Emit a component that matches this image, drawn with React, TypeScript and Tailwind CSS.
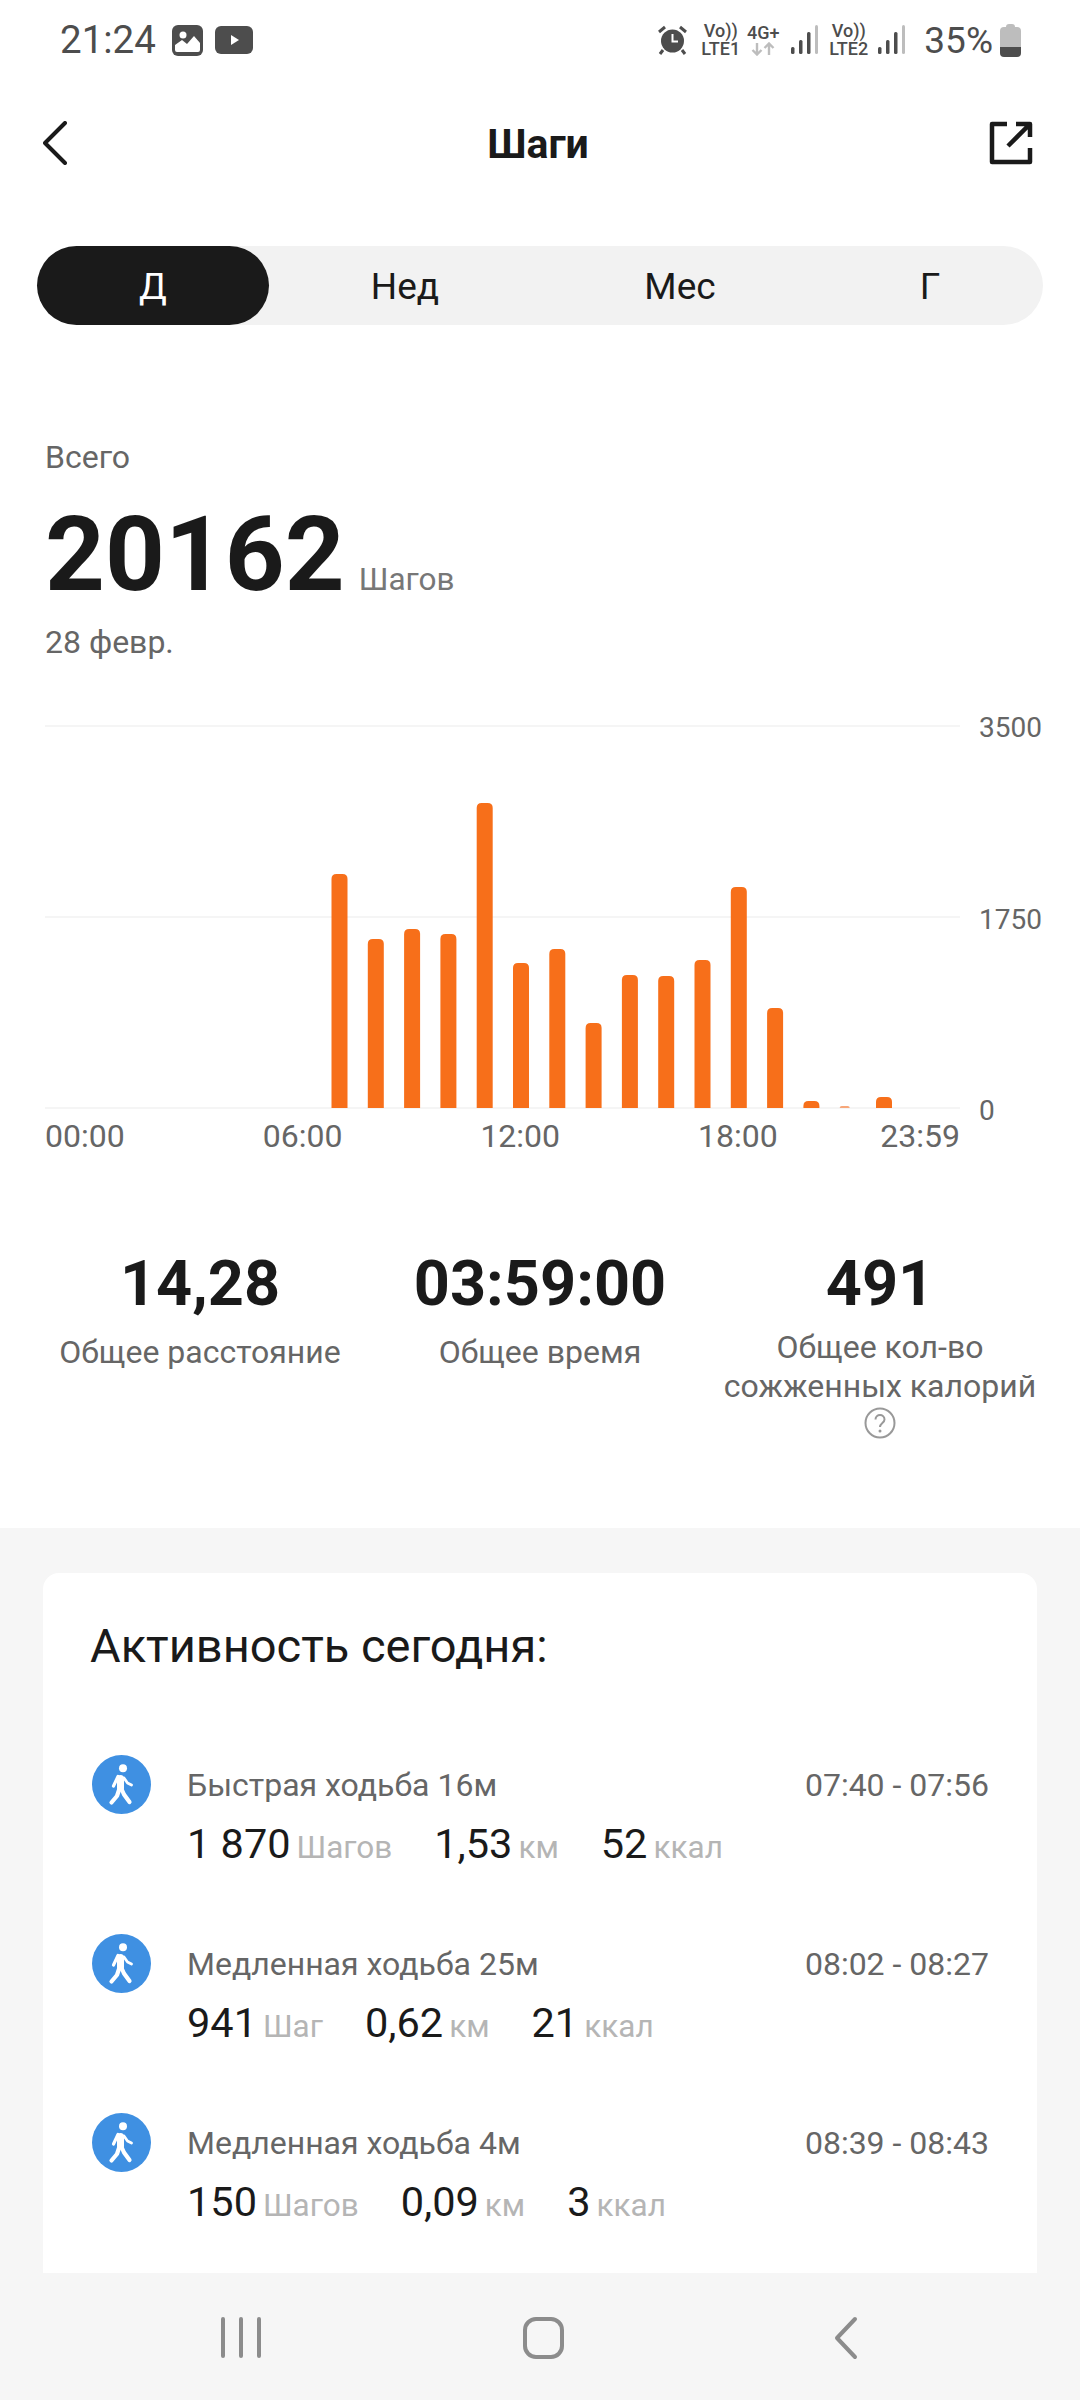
import React from 'react';

const bars = [
  { h: 234 }, { h: 169 }, { h: 179 }, { h: 174 }, { h: 305 }, { h: 145 }, { h: 159 }, { h: 85 },
  { h: 133 }, { h: 132 }, { h: 148 }, { h: 221 }, { h: 100 }, { h: 7 }, { h: 2 }, { h: 11 },
];

const activities = [
  {
    title: 'Быстрая ходьба 16м',
    time: '07:40 - 07:56',
    values: [['1 870', 'Шагов'], ['1,53', 'км'], ['52', 'ккал']],
  },
  {
    title: 'Медленная ходьба 25м',
    time: '08:02 - 08:27',
    values: [['941', 'Шаг'], ['0,62', 'км'], ['21', 'ккал']],
  },
  {
    title: 'Медленная ходьба 4м',
    time: '08:39 - 08:43',
    values: [['150', 'Шагов'], ['0,09', 'км'], ['3', 'ккал']],
  },
];

const Signal = () => (
  <svg width="28" height="30" viewBox="0 0 28 30" className="shrink-0">
    <rect x="0" y="22" width="3.5" height="7" rx="1.5" fill="#4d4d4d" />
    <rect x="8" y="15" width="3.5" height="14" rx="1.5" fill="#4d4d4d" />
    <rect x="16" y="7" width="3.5" height="22" rx="1.5" fill="#4d4d4d" />
    <rect x="24" y="0" width="3" height="29" rx="1.5" fill="#bdbdbd" />
  </svg>
);

const Walker = () => (
  <svg width="59" height="59" viewBox="0 0 59 59" fill="none" stroke="#fff" strokeLinecap="round" strokeLinejoin="round" className="shrink-0">
    <circle cx="29.5" cy="29.5" r="29.5" fill="#3f90e2" stroke="none" />
    <circle cx="31" cy="13.3" r="4" fill="#fff" stroke="none" />
    <path d="M28.5 23.5 V33" strokeWidth="7" />
    <path d="M26 21.5 L21.5 31" strokeWidth="3.2" />
    <path d="M32 23 L35.5 28 L39.5 30" strokeWidth="2.8" />
    <path d="M29.5 34 L32 39.5 L37.5 47" strokeWidth="4.2" />
    <path d="M27 35 L25 41 L19.5 47.5" strokeWidth="4.2" />
  </svg>
);

export default function App() {
  return (
    <div className="w-[1080px] h-[2400px] flex flex-col overflow-hidden bg-white font-[Roboto,sans-serif] text-[#1a1a1a]">
      {/* status bar */}
      <div className="h-[80px] flex items-center pl-[60px] pr-[59px] text-[#4d4d4d]">
        <span className="text-[38.5px] leading-none w-[112px]">21:24</span>
        <svg width="31" height="31" viewBox="0 0 31 31" className="shrink-0">
          <rect width="31" height="31" rx="6" fill="#4d4d4d" />
          <circle cx="11" cy="10" r="3.5" fill="#fff" />
          <path d="M3 25 V20 L10 15 L15 19 L22 11 L28 18 V25 Q28 27 26 27 H5 Q3 27 3 25 Z" fill="#fff" />
        </svg>
        <svg width="38" height="28" viewBox="0 0 38 28" className="shrink-0 ml-[12px]">
          <rect width="38" height="28" rx="6" fill="#4d4d4d" />
          <path d="M16 9 L24 14 L16 19 Z" fill="#fff" />
        </svg>
        <div className="ml-auto flex items-center">
          <svg width="29" height="30" viewBox="0 0 29 30" className="shrink-0">
            <circle cx="14.5" cy="16" r="11.5" fill="#4d4d4d" />
            <path d="M14.5 9 V16.5 H20" fill="none" stroke="#fff" strokeWidth="2" />
            <path d="M1 7 L7 2 M28 7 L22 2 M5 25 L2 29 M24 25 L27 29" stroke="#4d4d4d" strokeWidth="3" />
          </svg>
          <div className="ml-[14px] w-[39px] flex flex-col items-center text-[18px] leading-[18px] font-medium">
            <span>Vo))</span>
            <span>LTE1</span>
          </div>
          <div className="ml-[8px] w-[30px] flex flex-col items-center text-[18px] leading-[18px] font-medium">
            <span>4G+</span>
            <svg width="24" height="14" viewBox="0 0 24 14" fill="none" stroke="#bdbdbd" strokeWidth="2.4">
              <path d="M6 1 V12 M1.5 8 L6 12.5 L10.5 8 M18 13 V2 M13.5 6 L18 1.5 L22.5 6" />
            </svg>
          </div>
          <div className="ml-[13px]"><Signal /></div>
          <div className="ml-[10px] w-[39px] flex flex-col items-center text-[18px] leading-[18px] font-medium">
            <span>Vo))</span>
            <span>LTE2</span>
          </div>
          <div className="ml-[10px]"><Signal /></div>
          <span className="ml-[18px] text-[37px] leading-none">35%</span>
          <svg width="21" height="33" viewBox="0 0 21 33" className="shrink-0 ml-[7px]">
            <path d="M6 3 Q6 0 9 0 H12 Q15 0 15 3 H17 Q21 3 21 7 V23 H0 V7 Q0 3 4 3 Z" fill="#bdbdbd" />
            <path d="M0 23 H21 V29 Q21 33 17 33 H4 Q0 33 0 29 Z" fill="#4d4d4d" />
          </svg>
        </div>
      </div>

      {/* header */}
      <div className="mt-[20px] h-[86px] flex items-center justify-between pl-[43px] pr-[47px]">
        <div className="w-[44px] flex">
          <svg width="24" height="44" viewBox="0 0 24 44" fill="none" stroke="#1a1a1a" strokeWidth="4" strokeLinecap="round" strokeLinejoin="round">
            <path d="M22 2 L2 22 L22 42" />
          </svg>
        </div>
        <span className="mt-[3px] text-[41px] font-bold leading-none">Шаги</span>
        <svg width="44" height="44" viewBox="0 0 44 44" fill="none" stroke="#1a1a1a" strokeWidth="4.5" strokeLinejoin="round">
          <path d="M18 3 H3 V41 H41 V27" />
          <path d="M19 25 L41 3 M27 3 H41 V16" />
        </svg>
      </div>

      {/* period tabs */}
      <div className="mt-[60px] ml-[37px] w-[1006px] h-[79px] rounded-full bg-[#f2f2f2] flex items-center text-[37px]">
        <div className="w-[232px] h-full rounded-full bg-[#1a1a1a] text-white flex items-center justify-center pt-[2px]">Д</div>
        <div className="w-[272px] text-center pt-[2px]">Нед</div>
        <div className="w-[278px] text-center pt-[2px]">Мес</div>
        <div className="w-[222px] text-center pt-[2px]">Г</div>
      </div>

      {/* total */}
      <div className="mt-[112px] pl-[45px]">
        <div className="text-[32px] leading-[40px] text-[#666]">Всего</div>
        <div className="mt-[25.5px] flex items-baseline">
          <span className="text-[104.5px] leading-[104px] font-bold">20162</span>
          <span className="ml-[14px] text-[31.5px] text-[#777]">Шагов</span>
        </div>
        <div className="mt-[15.5px] text-[32px] leading-[40px] text-[#666]">28 февр.</div>
      </div>

      {/* chart */}
      <div className="mt-[53px] pl-[45px]">
        <div className="flex">
          <svg width="915" height="409" viewBox="0 0 915 409" className="shrink-0">
            <path d="M0 11 H915 M0 202 H915 M0 393 H915" stroke="#f5f5f5" strokeWidth="2" />
            {bars.map((bar, i) => (
              <path
                key={i}
                d={`M${286.5 + i * 36.3} 393 V${393 - bar.h + Math.min(bar.h, 5)} q0 -${Math.min(bar.h, 5)} ${Math.min(bar.h, 5)} -${Math.min(bar.h, 5)} h6 q${Math.min(bar.h, 5)} 0 ${Math.min(bar.h, 5)} ${Math.min(bar.h, 5)} V393 Z`}
                fill={bar.h < 3 ? '#f7a77a' : '#f76f1a'}
              />
            ))}
          </svg>
          <div className="ml-[19px] flex flex-col justify-between text-[28px] leading-[26px] text-[#666]">
            <span>3500</span>
            <span>1750</span>
            <span>0</span>
          </div>
        </div>
        <div className="w-[915px] h-[24px] flex items-center justify-between text-[32px] leading-[24px] text-[#666]">
          <div className="flex gap-[138px]">
            <span>00:00</span>
            <span>06:00</span>
            <span>12:00</span>
            <span>18:00</span>
          </div>
          <span>23:59</span>
        </div>
      </div>

      {/* stats */}
      <div className="h-[380px] pt-[106px] pl-[30px] flex items-start">
        <div className="w-[340px] flex flex-col items-center">
          <span className="text-[63px] leading-[60px] font-bold">14,28</span>
          <span className="mt-[19px] text-[32px] leading-[39px] text-[#666]">Общее расстояние</span>
        </div>
        <div className="w-[340px] flex flex-col items-center">
          <span className="text-[63px] leading-[60px] font-bold">03:59:00</span>
          <span className="mt-[19px] text-[32px] leading-[39px] text-[#666]">Общее время</span>
        </div>
        <div className="w-[340px] flex flex-col items-center">
          <span className="text-[63px] leading-[60px] font-bold">491</span>
          <span className="mt-[14px] text-[32px] leading-[39px] text-[#666] text-center">
            Общее кол-во<br />сожженных калорий
          </span>
          <svg width="32" height="32" viewBox="0 0 32 32" fill="none" className="mt-[1px]">
            <circle cx="16" cy="16" r="14.5" stroke="#999" strokeWidth="2" />
            <path d="M11.5 12.5 C11.5 6.5 20.5 6.5 20.5 12.5 C20.5 16 16 16 16 20" stroke="#999" strokeWidth="2" />
            <circle cx="16" cy="24" r="1.5" fill="#999" />
          </svg>
        </div>
      </div>

      {/* activity */}
      <div className="flex-1 bg-[#f6f6f6] pt-[45px] flex flex-col">
        <div className="ml-[43px] w-[994px] h-[700px] overflow-hidden bg-white rounded-t-[16px] pt-[43px]">
          <div className="pl-[47px] text-[47px] leading-[60px]">Активность сегодня:</div>
          <div className="mt-[79px] flex flex-col gap-[62.5px]">
            {activities.map((a) => (
              <div key={a.title} className="flex items-start pl-[49px] pr-[48px]">
                <Walker />
                <div className="ml-[36px] flex-1">
                  <div className="mt-[9.5px] flex justify-between text-[32px] leading-[40px] text-[#666]">
                    <span>{a.title}</span>
                    <span>{a.time}</span>
                  </div>
                  <div className="mt-[15px] flex items-baseline gap-[42px] leading-[48px]">
                    {a.values.map(([value, unit]) => (
                      <div key={unit} className="flex items-baseline gap-[6px]">
                        <span className="text-[41.5px]">{value}</span>
                        <span className="text-[31.5px] text-[#b5b5b5]">{unit}</span>
                      </div>
                    ))}
                  </div>
                </div>
              </div>
            ))}
          </div>
        </div>

        {/* nav bar */}
        <div className="flex-1 relative">
          <svg width="1080" height="127" viewBox="0 0 1080 127" fill="none" stroke="#8c8c8c" strokeWidth="4" strokeLinecap="round" strokeLinejoin="round">
            <path d="M223 46 V83 M241 46 V83 M259 46 V83" />
            <rect x="525" y="46" width="37" height="38" rx="11" />
            <path d="M855 46 L837 65 L855 84" />
          </svg>
        </div>
      </div>
    </div>
  );
}
